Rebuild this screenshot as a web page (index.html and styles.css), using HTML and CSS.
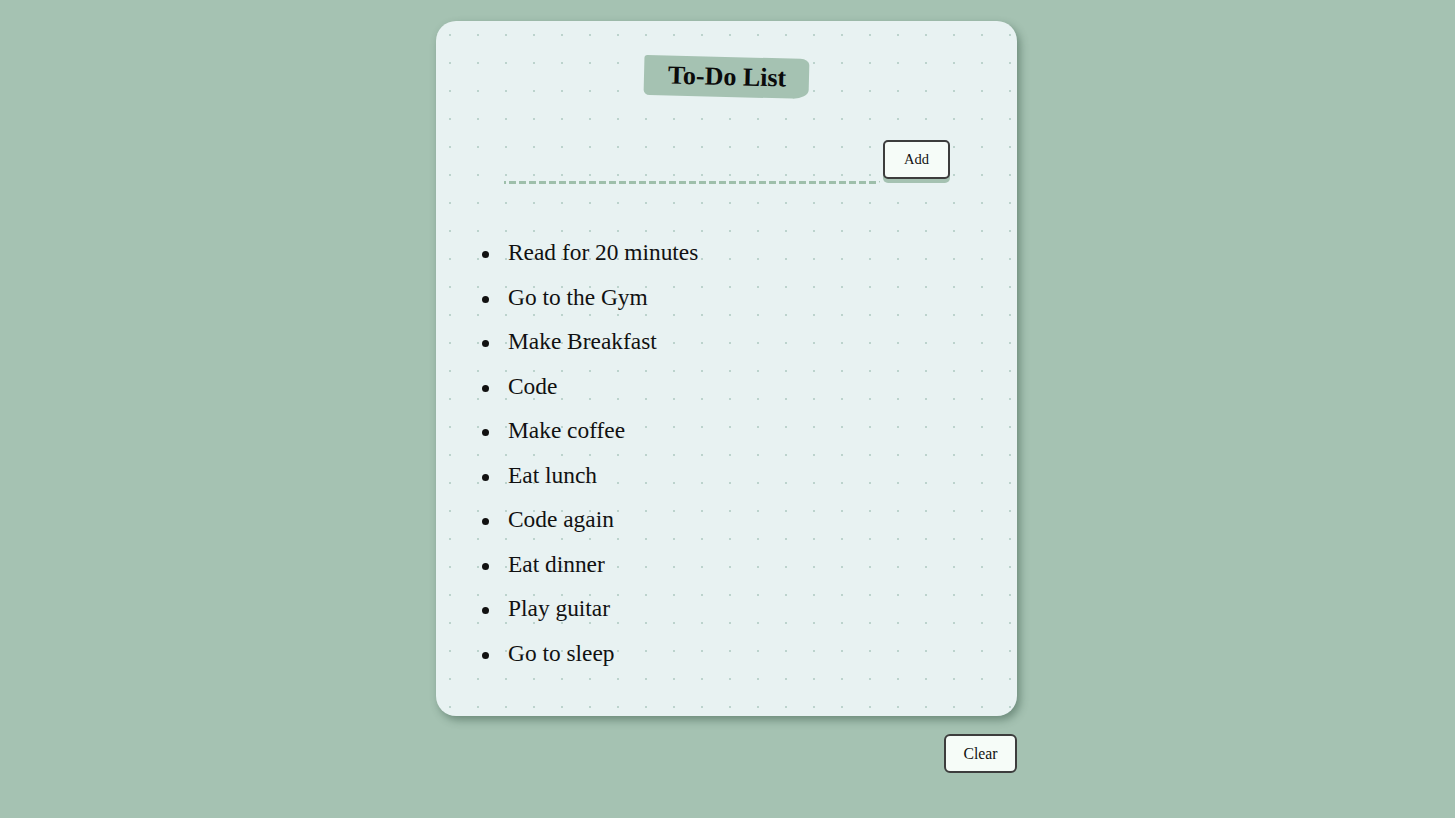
FILE: index.html
```html
<!DOCTYPE html>
<html lang="en">
<head>
<meta charset="utf-8">
<title>To-Do List</title>
<link rel="stylesheet" href="styles.css">
</head>
<body>
<div class="wrap">
  <div class="card">
    <div class="title-row"><h1 class="title">To-Do List</h1></div>
    <form class="add-form">
      <input class="task-input" type="text" aria-label="New task">
      <button class="btn btn-add" type="button">Add</button>
    </form>
    <ul class="tasks">
      <li>Read for 20 minutes</li>
      <li>Go to the Gym</li>
      <li>Make Breakfast</li>
      <li>Code</li>
      <li>Make coffee</li>
      <li>Eat lunch</li>
      <li>Code again</li>
      <li>Eat dinner</li>
      <li>Play guitar</li>
      <li>Go to sleep</li>
    </ul>
  </div>
  <div class="actions">
    <button class="btn btn-clear" type="button">Clear</button>
  </div>
</div>
</body>
</html>
```
FILE: styles.css
```css
html, body {
  margin: 0;
  padding: 0;
}
body {
  background: #a5c2b2;
  font-family: "Liberation Serif", "Times New Roman", serif;
  color: #111;
  min-height: 818px;
}
.wrap {
  width: 581px;
  margin: 21px 0 0 calc(50% - 291.5px);
}
.card {
  box-sizing: border-box;
  height: 695px;
  padding-top: 36px;
  border-radius: 20px;
  background-color: #e8f2f2;
  background-image: radial-gradient(circle, #bcd3cd 0.9px, transparent 1.4px);
  background-size: 28px 28px;
  box-shadow: 3px 4px 9px rgba(40, 70, 55, 0.45);
}
.title-row {
  text-align: center;
}
.title {
  display: inline-block;
  margin: 0;
  padding: 6px 23px 6px 24px;
  font-size: 26px;
  line-height: 28px;
  font-weight: bold;
  color: #0b0b0b;
  background: #a5c2b2;
  border-radius: 3px 9px 16px 6px / 3px 6px 9px 5px;
  transform: rotate(1.4deg);
}
.add-form {
  display: flex;
  justify-content: center;
  align-items: flex-start;
  gap: 3px;
  margin-top: 43px;
  padding-left: 1px;
}
.task-input {
  box-sizing: border-box;
  width: 376px;
  height: 44px;
  margin: 0;
  padding: 0 6px 3px;
  border: none;
  border-bottom-right-radius: 4px;
  background-color: transparent;
  background-image: linear-gradient(to right, #9ebfab 0 2px, transparent 2px 5px), repeating-linear-gradient(to right, #9ebfab 0 7px, transparent 7px 10px);
  background-size: 5px 3px, calc(100% - 5px) 3px;
  background-position: left bottom, 5px bottom;
  background-repeat: no-repeat;
  font-family: inherit;
  font-size: 18px;
  outline: none;
}
.btn {
  box-sizing: border-box;
  margin: 0;
  padding: 0;
  border: 2px solid #3d3d3d;
  border-radius: 5px;
  background: #f6fcf8;
  color: #111;
  font-family: "Liberation Serif", "Times New Roman", serif;
  cursor: pointer;
}
.btn-add {
  width: 67px;
  height: 39px;
  font-size: 14.5px;
  box-shadow: 0 4px 0 #a5c2b2;
}
.tasks {
  margin: 46px 0 0;
  padding-left: 72px;
  font-size: 23.4px;
  line-height: 44.5px;
  list-style: none;
}
.tasks li::before {
  content: "";
  display: inline-block;
  width: 7px;
  height: 7px;
  border-radius: 50%;
  background: #111;
  margin-left: -26.5px;
  margin-right: 19.5px;
  vertical-align: middle;
}
.actions {
  display: flex;
  justify-content: flex-end;
  margin-top: 18px;
}
.btn-clear {
  width: 73px;
  height: 39px;
  font-size: 15.7px;
  border-width: 2.5px;
  border-radius: 6px;
}
```
